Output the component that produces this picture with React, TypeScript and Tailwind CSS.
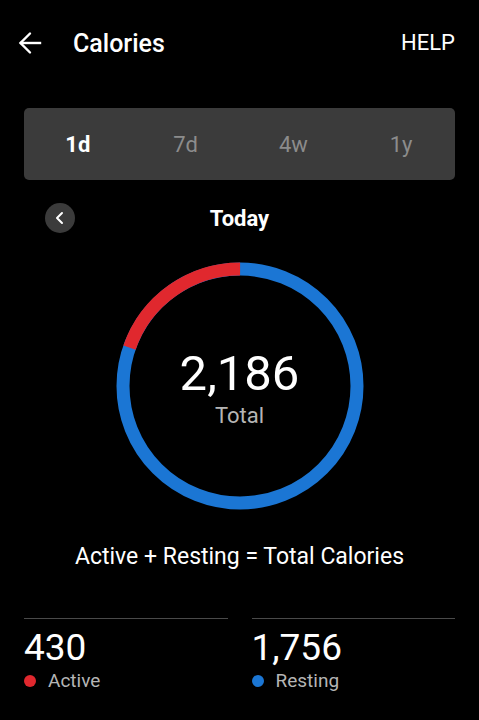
import React from "react";

export default function App() {
  const r = 117;
  const c = 2 * Math.PI * r;
  const activeFrac = 430 / 2186;
  return (
    <div
      className="w-[479px] h-[720px] bg-black text-white overflow-hidden"
      style={{ fontFamily: "Roboto, 'Noto Sans', sans-serif" }}
    >
      {/* Header */}
      <div className="flex items-center h-[86px] pl-[18px] pr-[24px]">
        <svg width="24" height="24" viewBox="0 0 24 24" fill="none" stroke="white" strokeWidth="2.4" strokeLinecap="square">
          <path d="M22 12H3" />
          <path d="M12 2.5L2.5 12L12 21.5" strokeLinecap="round" />
        </svg>
        <div className="ml-[31px] text-[25px] font-medium leading-none">Calories</div>
        <div className="ml-auto text-[22px] leading-none">HELP</div>
      </div>

      {/* Segmented control */}
      <div className="mx-[24px] mt-[22px] h-[72px] rounded-[5px] bg-[#3b3b3b] grid grid-cols-4 items-center text-[22px]">
        <div className="text-center font-bold text-white">1d</div>
        <div className="text-center text-[#8c8c8c]">7d</div>
        <div className="text-center text-[#8c8c8c]">4w</div>
        <div className="text-center text-[#8c8c8c]">1y</div>
      </div>

      {/* Date nav */}
      <div className="relative mt-[22px] h-[32px] flex items-center justify-center">
        <div className="absolute left-[45px] top-[1px] w-[30px] h-[30px] rounded-full bg-[#3b3b3b] flex items-center justify-center">
          <svg width="14" height="14" viewBox="0 0 14 14" fill="none" stroke="white" strokeWidth="2" strokeLinecap="round" strokeLinejoin="round">
            <path d="M9 2L4 7L9 12" />
          </svg>
        </div>
        <div className="text-[22px] font-bold">Today</div>
      </div>

      {/* Ring */}
      <div className="mt-[28px] flex justify-center">
        <div className="relative w-[248px] h-[248px]">
          <svg width="248" height="248" viewBox="0 0 248 248">
            <circle cx="124" cy="124" r={r} fill="none" stroke="#1b76d4" strokeWidth="13" />
            <circle
              cx="124"
              cy="124"
              r={r}
              fill="none"
              stroke="#e0282e"
              strokeWidth="13"
              strokeDasharray={`${c * activeFrac} ${c}`}
              transform={`rotate(${-90 - 360 * activeFrac} 124 124)`}
            />
          </svg>
          <div className="absolute inset-0 pt-[3px] flex flex-col items-center justify-center">
            <div className="text-[49px] leading-none">2,186</div>
            <div className="text-[22px] leading-none mt-[7px] text-[#b5b5b5]">Total</div>
          </div>
        </div>
      </div>

      {/* Equation */}
      <div className="mt-[35px] text-center text-[23px] leading-none">Active + Resting = Total Calories</div>

      {/* Stats */}
      <div className="mx-[24px] mt-[50px] grid grid-cols-2 gap-[24px]">
        <div className="border-t border-[#4a4a4a] pt-[10px]">
          <div className="text-[37px] leading-none">430</div>
          <div className="mt-[5px] flex items-center text-[19px] text-[#b5b5b5] leading-none">
            <span className="w-[12px] h-[12px] rounded-full bg-[#e0282e] mr-[12px]" />
            Active
          </div>
        </div>
        <div className="border-t border-[#4a4a4a] pt-[10px]">
          <div className="text-[37px] leading-none">1,756</div>
          <div className="mt-[5px] flex items-center text-[19px] text-[#b5b5b5] leading-none">
            <span className="w-[12px] h-[12px] rounded-full bg-[#1b76d4] mr-[12px]" />
            Resting
          </div>
        </div>
      </div>
    </div>
  );
}
